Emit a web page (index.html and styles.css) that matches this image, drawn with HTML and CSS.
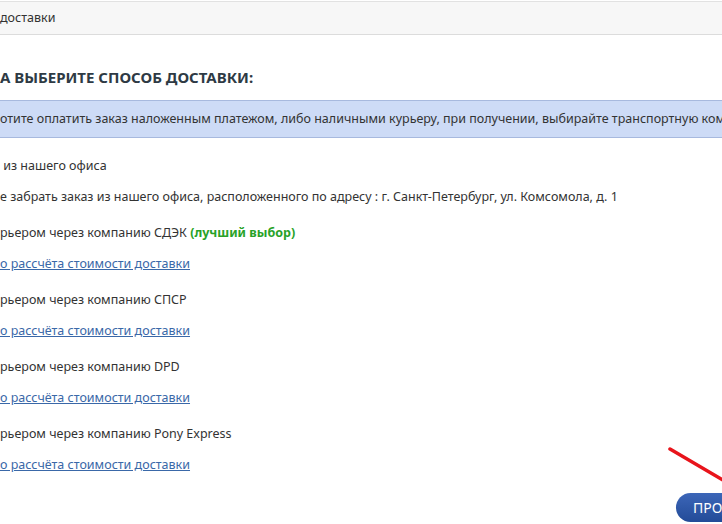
FILE: index.html
```html
<!DOCTYPE html>
<html lang="ru">
<head>
  <meta charset="UTF-8">
  <meta name="viewport" content="width=device-width, initial-scale=1.0">
  <title>Доставка</title>
  <link rel="stylesheet" href="styles.css">
</head>
<body>
  <div class="page">
    <!-- Заголовок панели -->
    <div class="panel-heading">доставки</div>

    <h2 class="title">А выберите способ доставки:</h2>

    <div class="notice">отите оплатить заказ наложенным платежом, либо наличными курьеру, при получении, выбирайте транспортную компанию</div>

    <!-- Способы доставки -->
    <div class="methods">
      <div class="method">
        <p class="method-name">&nbsp;из нашего офиса</p>
        <p class="method-desc">е забрать заказ из нашего офиса, расположенного по адресу : г. Санкт-Петербург, ул. Комсомола, д. 1</p>
      </div>
      <div class="method">
        <p class="method-name">рьером через компанию СДЭК <span class="best">(лучший выбор)</span></p>
        <a class="calc-link" href="#">о рассчёта стоимости доставки</a>
      </div>
      <div class="method">
        <p class="method-name">рьером через компанию СПСР</p>
        <a class="calc-link" href="#">о рассчёта стоимости доставки</a>
      </div>
      <div class="method">
        <p class="method-name">рьером через компанию DPD</p>
        <a class="calc-link" href="#">о рассчёта стоимости доставки</a>
      </div>
      <div class="method">
        <p class="method-name">рьером через компанию Pony Express</p>
        <a class="calc-link" href="#">о рассчёта стоимости доставки</a>
      </div>
    </div>

    <div class="actions">
      <button class="next-btn">Продолжить</button>
    </div>

    <!-- Стрелка-указатель -->
    <svg class="pointer" width="60" height="40" viewBox="0 0 60 40">
      <line x1="2" y1="2" x2="60" y2="36" stroke="#e8141b" stroke-width="3.5" stroke-linecap="round"/>
    </svg>
  </div>
</body>
</html>
```

FILE: styles.css
```css
/* Общие стили */
html, body {
  margin: 0;
  overflow: hidden;
}

body {
  font-family: 'Noto Sans', Arial, sans-serif;
  font-size: 12.5px;
  color: #333;
  background: #fff;
}

.page {
  position: relative;
  width: 722px;
  height: 524px;
}

/* Шапка панели */
.panel-heading {
  margin-top: 1px;
  height: 32px;
  line-height: 32px;
  background: #f7f7f7;
  border-top: 1px solid #e2e2e2;
  border-bottom: 1px solid #dcdcdc;
  color: #333;
}

.title {
  margin: 31px 0 0;
  font-size: 15px;
  font-weight: bold;
  text-transform: uppercase;
  color: #2e3a44;
  line-height: 22px;
}

/* Подсказка */
.notice {
  margin-top: 12px;
  height: 36px;
  line-height: 36px;
  background: #cddbf6;
  border-top: 1px solid #a7b9de;
  border-bottom: 1px solid #a7b9de;
  white-space: nowrap;
  overflow: hidden;
}

/* Список */
.methods {
  margin-top: 18px;
}

.method p {
  margin: 0;
  line-height: 20px;
}

.method-name {
  padding: 0 0 11px;
}

.method-desc {
  padding-bottom: 16px;
}

.best {
  color: #28a228;
  font-weight: bold;
}

.calc-link {
  display: block;
  line-height: 20px;
  padding-bottom: 16px;
  color: #3a68a8;
}

.actions {
  display: flex;
  justify-content: flex-start;
  padding-left: 676px;
  margin-top: 2px;
}

.next-btn {
  flex: none;
  height: 29px;
  padding: 0 17px;
  border: none;
  border-radius: 15px;
  background: linear-gradient(#3c66b8, #234b98);
  color: #fff;
  font-family: inherit;
  font-size: 14px;
  text-transform: uppercase;
  cursor: pointer;
}

.pointer {
  position: absolute;
  left: 668px;
  top: 446px;
}
```
